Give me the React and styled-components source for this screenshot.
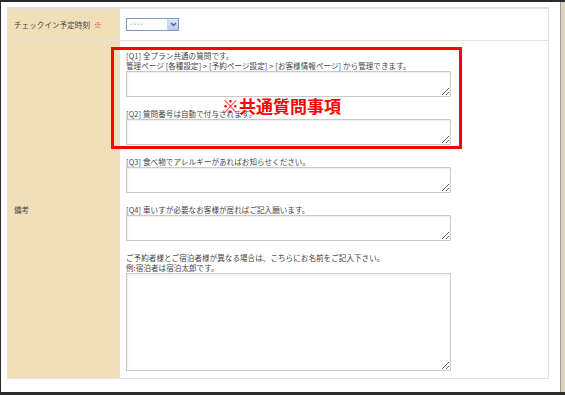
import React from 'react'
import styled, {createGlobalStyle} from 'styled-components'

const Global = createGlobalStyle`
  html, body {
    margin: 0;
    padding: 0;
    background: #fff;
  }
  body {
    font-family: "Noto Sans CJK JP", "Noto Sans", sans-serif;
  }
`

const Frame = styled.div`
  width: 565px;
  height: 395px;
  box-sizing: border-box;
  display: flex;
  border-top: 2px solid #2b2b2b;
  border-bottom: 3px solid #2b2b2b;
  border-left: 1px solid #2b2b2b;
  overflow: hidden;
`

const Page = styled.div`
  flex: 1;
  padding: 5px 0 0 6px;
  background: #fff;
`

const Edge = styled.div`
  width: 4px;
  border-left: 1px solid #9c9c9c;
  background: #d9d3bd;
`

const Table = styled.div`
  width: 542px;
  box-sizing: border-box;
  display: grid;
  grid-template-columns: 112px 1fr;
  border: 1px solid #e2e2e2;
  border-top-width: 2px;
`

const Label = styled.div`
  background: #f0dfb9;
  display: flex;
  align-items: center;
  padding-left: 6px;
  height: ${({short}) => short ? '31px' : 'auto'};
  font-size: 7.5px;
  letter-spacing: 0.1px;
  color: #444;
  border-right: 1px solid #e2e2e2;
  border-top: ${({first}) => first ? 'none' : '1px solid #e2e2e2'};
`

const Required = styled.span`
  color: #e3381b;
  font-weight: 700;
  margin-left: 4px;
`

const Cell = styled.div`
  position: relative;
  display: flex;
  flex-direction: ${({stack}) => stack ? 'column' : 'row'};
  align-items: ${({stack}) => stack ? 'flex-start' : 'center'};
  gap: ${({stack}) => stack ? '12px' : '0'};
  padding: ${({stack}) => stack ? '10px 0 7px 6px' : '0 0 0 6px'};
  border-top: ${({first}) => first ? 'none' : '1px solid #e2e2e2'};
`

const Select = styled.div`
  width: 53px;
  height: 13px;
  box-sizing: border-box;
  border: 1px solid #7f9db9;
  background: #fff;
  display: flex;
`

const SelectText = styled.span`
  flex: 1;
  padding-left: 3px;
  font-family: "DejaVu Sans", sans-serif;
  font-size: 7px;
  line-height: 11px;
  letter-spacing: 1px;
  color: #777;
`

const SelectArrow = styled.span`
  width: 10px;
  display: flex;
  align-items: center;
  justify-content: center;
  background: linear-gradient(#dbe6f9, #b7cbef);
  border-left: 1px solid #c9d7ef;
`

const Question = styled.div`
  display: flex;
  flex-direction: column;
`

const Caption = styled.div`
  font-size: 7.5px;
  line-height: 10px;
  letter-spacing: 0.1px;
  color: #444;
  white-space: nowrap;
`

const Field = styled.textarea`
  display: block;
  width: 325px;
  height: ${({tall}) => tall ? '98px' : '26px'};
  box-sizing: border-box;
  margin: 0;
  padding: 2px;
  border: 1px solid #cacaca;
  border-radius: 0;
  box-shadow: inset 1px 1px 2px rgba(0, 0, 0, 0.07);
  background: #fff;
  font-size: 8px;
  font-family: inherit;
`

const Highlight = styled.div`
  position: absolute;
  left: -9px;
  top: 6px;
  width: 351px;
  height: 102px;
  box-sizing: border-box;
  border: 3px solid #ff0000;
  pointer-events: none;
`

const Note = styled.div`
  position: absolute;
  left: 102px;
  top: 56px;
  font-size: 17px;
  line-height: 17px;
  font-weight: 700;
  color: #ff0000;
  white-space: nowrap;
`

const questions = [
  {lines: ['[Q1] 全プラン共通の質問です。', '管理ページ [各種設定] > [予約ページ設定] > [お客様情報ページ] から管理できます。']},
  {lines: ['[Q2] 質問番号は自動で付与されます。']},
  {lines: ['[Q3] 食べ物でアレルギーがあればお知らせください。']},
  {lines: ['[Q4] 車いすが必要なお客様が居ればご記入願います。']},
  {lines: ['ご予約者様とご宿泊者様が異なる場合は、こちらにお名前をご記入下さい。', '例:宿泊者は宿泊太郎です。'], tall: true},
]

const App = () => {
  return (
    <>
      <Global />
      <Frame>
        <Page>
          <Table>
            <Label first short>チェックイン予定時刻<Required>※</Required></Label>
            <Cell first>
              <Select>
                <SelectText>----</SelectText>
                <SelectArrow>
                  <svg width="7" height="5" viewBox="0 0 7 5">
                    <polyline points="1,1 3.5,3.5 6,1" fill="none" stroke="#4a5f88" strokeWidth="1.4" />
                  </svg>
                </SelectArrow>
              </Select>
            </Cell>

            <Label>備考</Label>
            <Cell stack>
              {questions.map((q, i) => (
                <Question key={i}>
                  {q.lines.map((line, j) => <Caption key={j}>{line}</Caption>)}
                  <Field tall={q.tall} />
                </Question>
              ))}
              <Highlight />
              <Note>※共通質問事項</Note>
            </Cell>
          </Table>
        </Page>
        <Edge />
      </Frame>
    </>
  )
}

export default App
